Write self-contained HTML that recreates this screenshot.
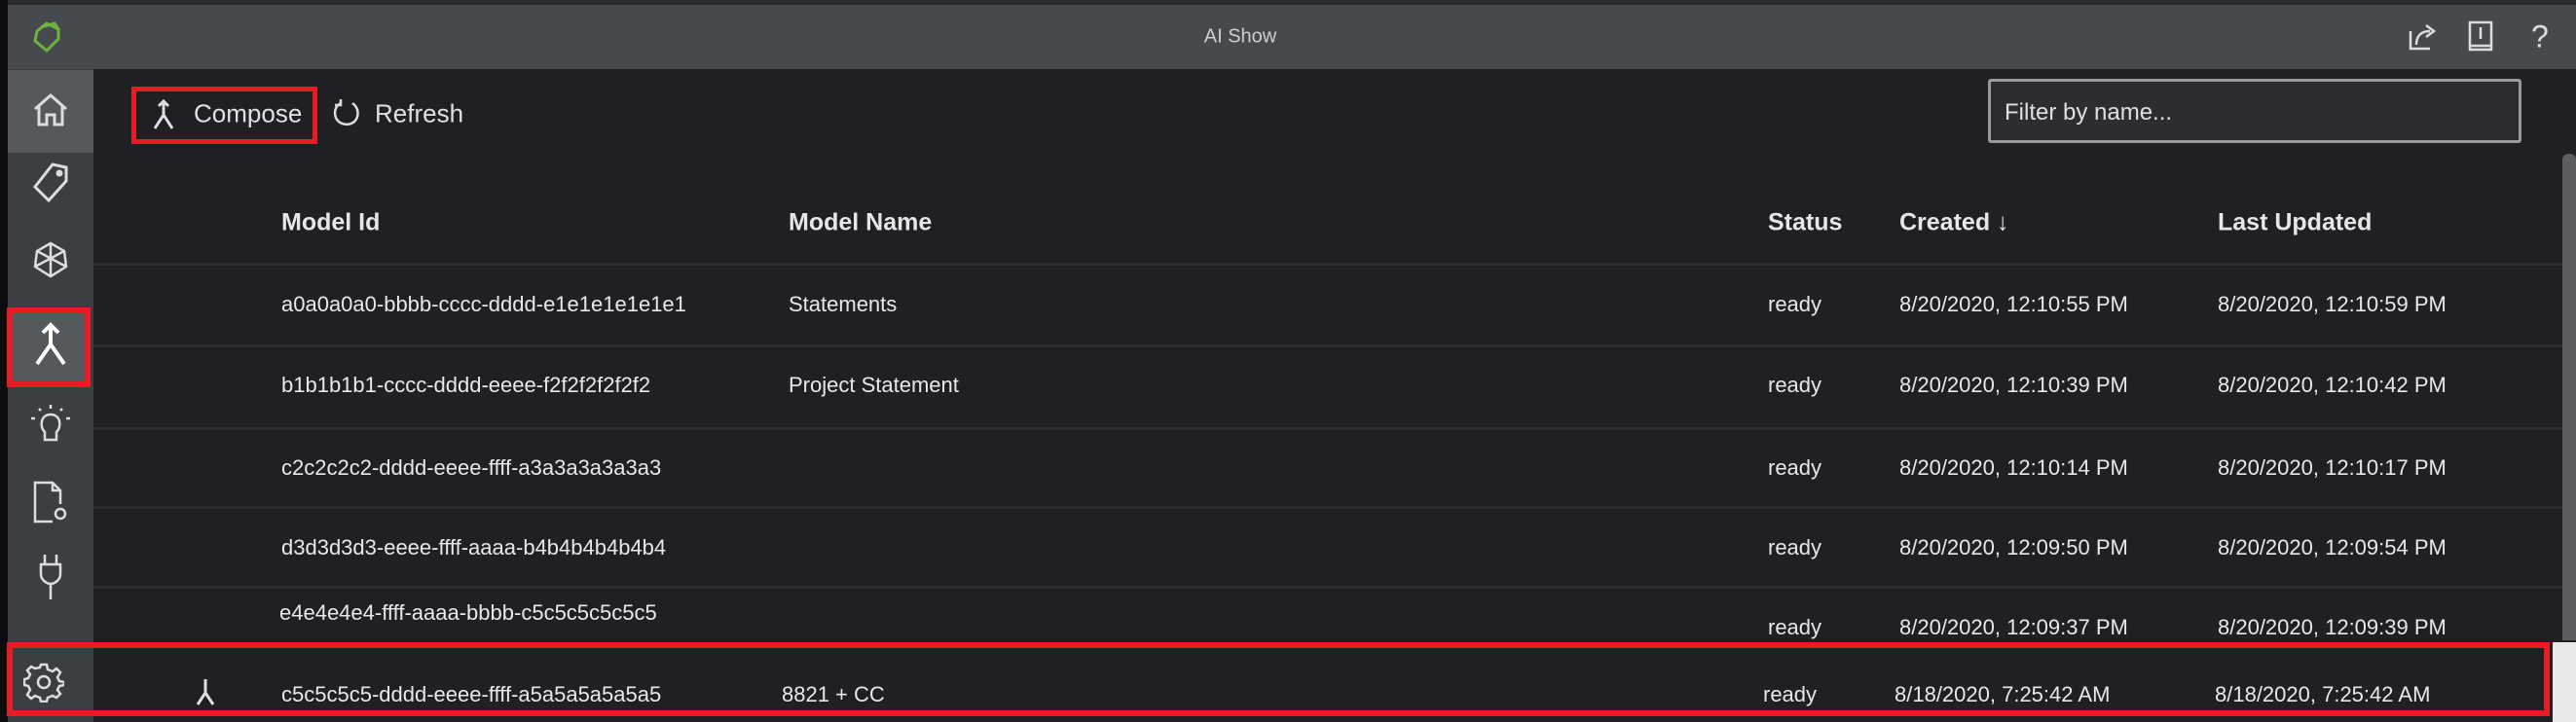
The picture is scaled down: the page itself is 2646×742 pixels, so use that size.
<!DOCTYPE html>
<html><head><meta charset="utf-8"><style>
*{margin:0;padding:0;box-sizing:border-box}
body{width:2646px;height:742px;background:#1f2024;position:relative;overflow:hidden;font-family:"Liberation Sans",sans-serif;color:#e8e8e8}
.a{position:absolute;white-space:nowrap}
.t{font-size:22px;line-height:22px;transform:translateY(-50%)}
.h{font-size:25px;font-weight:bold;transform:translateY(-50%);color:#e6e6e6}
.sep{position:absolute;left:96px;right:14px;height:3px;background:#2a2c30}
svg{position:absolute}
</style></head><body>
<div class="a" style="left:0;top:0;width:2646px;height:5px;background:#2a2b2e"></div>
<div class="a" style="left:0;top:5px;width:2646px;height:66px;background:#46494d"></div>
<div class="a" style="left:0;top:0;width:8px;height:742px;background:#0c0c0e"></div>
<div class="a" style="left:1274px;top:38px;font-size:20px;color:#cfcfcf;transform:translate(-50%,-50%)">AI Show</div>
<svg style="left:30px;top:20px" width="36" height="36" viewBox="0 0 36 36"><path d="M8 12 L18 4 L30 10 L30 20 L18 32 L6 22 Z M12 8 L26 4 L30 10" fill="none" stroke="#6cb33f" stroke-width="3"/></svg>
<svg style="left:2472px;top:22px" width="34" height="32" viewBox="0 0 34 32" fill="none" stroke="#ddd" stroke-width="2.5"><path d="M4 10 V28 H24 M10 24 C10 14 16 10 24 10 M20 4 L28 10 L20 16"/></svg>
<svg style="left:2534px;top:20px" width="28" height="36" viewBox="0 0 28 36" fill="none" stroke="#ddd" stroke-width="2.5"><rect x="3" y="3" width="22" height="28"/><path d="M3 27 H25 M14 8 V20"/></svg>
<div class="a" style="left:2600px;top:38px;font-size:32px;color:#ddd;transform:translateY(-50%)">?</div>
<!-- sidebar -->
<div class="a" style="left:8px;top:71px;width:88px;height:671px;background:#3b3e43"></div>
<div class="a" style="left:8px;top:72px;width:88px;height:85px;background:#55585c"></div>
<div class="a" style="left:12px;top:320px;width:80px;height:76px;background:#55585c"></div>
<div class="a" style="left:7px;top:316px;width:86px;height:82px;border:6px solid #e81c24"></div>
<svg style="left:32px;top:94px" width="40" height="38" viewBox="0 0 40 38" fill="none" stroke="#ddd" stroke-width="3"><path d="M4 18 L20 4 L36 18 M8 15 V34 H16 V24 H24 V34 H32 V15"/></svg>
<svg style="left:32px;top:166px" width="40" height="44" viewBox="0 0 40 44" fill="none" stroke="#ddd" stroke-width="3"><path d="M22 3 L36 6 L36 20 L18 40 L4 26 Z"/><circle cx="29" cy="12" r="2" fill="#ddd"/></svg>
<svg style="left:30px;top:246px" width="44" height="44" viewBox="0 0 44 44" fill="none" stroke="#ddd" stroke-width="2.5"><path d="M22 4 L36 12 L38 28 L22 38 L6 28 L8 12 Z M8 12 L38 28 M36 12 L6 28 M22 4 V38"/></svg>
<svg style="left:34px;top:330px" width="36" height="48" viewBox="0 0 36 48" fill="none" stroke="#fff" stroke-width="4"><path d="M18 4 V24 L4 44 M18 24 L32 44 M10 12 L18 4 L26 12"/></svg>
<svg style="left:32px;top:412px" width="40" height="46" viewBox="0 0 40 46" fill="none" stroke="#ddd" stroke-width="2.5"><path d="M14 32 C8 26 10 14 20 14 C30 14 32 26 26 32 V40 H14 Z M4 18 H0 M36 18 H40 M20 4 V8 M8 8 L10 10 M32 8 L30 10"/></svg>
<svg style="left:32px;top:492px" width="40" height="48" viewBox="0 0 40 48" fill="none" stroke="#ddd" stroke-width="2.5"><path d="M22 44 H4 V4 H22 L30 12 V26 M22 4 V12 H30"/><circle cx="30" cy="36" r="5"/></svg>
<svg style="left:36px;top:568px" width="32" height="50" viewBox="0 0 32 50" fill="none" stroke="#ddd" stroke-width="2.5"><path d="M10 2 V12 M22 2 V12 M6 12 H26 V22 C26 28 20 32 16 32 C12 32 6 28 6 22 Z M16 32 V48"/></svg>
<svg style="left:24px;top:680px" width="42" height="42" viewBox="0 0 42 42" fill="none" stroke="#ddd" stroke-width="2.5"><circle cx="21" cy="21" r="6"/><path d="M18 3 H24 L25 8 L30 10 L34 7 L38 11 L35 16 L37 20 L42 21 V24 L37 25 L35 29 L38 33 L34 37 L30 35 L25 37 L24 41 H18 L17 37 L12 35 L8 38 L4 34 L7 29 L5 25 L1 24 V18 L5 17 L7 13 L4 9 L8 5 L12 7 L17 6 Z"/></svg>
<!-- toolbar -->
<div class="a" style="left:135px;top:89px;width:191px;height:59px;border:5px solid #e81c24"></div>
<svg style="left:156px;top:102px" width="24" height="32" viewBox="0 0 24 32" fill="none" stroke="#ddd" stroke-width="3"><path d="M12 2 V16 L3 30 M12 16 L21 30 M7 7 L12 2 L17 7"/></svg>
<div class="a" style="left:199px;top:117px;font-size:26px;color:#e0e0e0;transform:translateY(-50%)">Compose</div>
<svg style="left:342px;top:100px" width="28" height="32" viewBox="0 0 28 32" fill="none" stroke="#ddd" stroke-width="2.5"><path d="M8 6 C2 9 1 16 3 21 C6 28 16 30 22 25 C27 20 27 11 20 6 M8 2 V8 H2"/></svg>
<div class="a" style="left:385px;top:117px;font-size:26px;color:#e0e0e0;transform:translateY(-50%)">Refresh</div>
<div class="a" style="left:2042px;top:81px;width:548px;height:66px;border:3px solid #9a9a9a;border-radius:3px;background:#2b2d31"></div>
<div class="a" style="left:2059px;top:116px;font-size:24px;color:#e0e0e0;transform:translateY(-50%)">Filter by name...</div>
<!-- scrollbar -->
<div class="a" style="left:2632px;top:158px;width:14px;height:500px;background:#5b5d61;border-radius:6px 6px 0 0"></div>
<div class="a" style="left:2622px;top:660px;width:24px;height:82px;background:#e8e8e8"></div>
<!-- header -->
<div class="a h" style="left:289px;top:229px">Model Id</div>
<div class="a h" style="left:810px;top:229px">Model Name</div>
<div class="a h" style="left:1816px;top:229px">Status</div>
<div class="a h" style="left:1951px;top:229px">Created ↓</div>
<div class="a h" style="left:2278px;top:229px">Last Updated</div>
<div class="sep" style="top:270px"></div>
<div class="sep" style="top:354px"></div>
<div class="sep" style="top:439px"></div>
<div class="sep" style="top:520px"></div>
<div class="sep" style="top:602px"></div>
<!-- rows -->
<div class="a t" style="left:289px;top:313px">a0a0a0a0-bbbb-cccc-dddd-e1e1e1e1e1e1</div>
<div class="a t" style="left:810px;top:313px">Statements</div>
<div class="a t" style="left:1816px;top:313px">ready</div>
<div class="a t" style="left:1951px;top:313px">8/20/2020, 12:10:55 PM</div>
<div class="a t" style="left:2278px;top:313px">8/20/2020, 12:10:59 PM</div>

<div class="a t" style="left:289px;top:396px">b1b1b1b1-cccc-dddd-eeee-f2f2f2f2f2f2</div>
<div class="a t" style="left:810px;top:396px">Project Statement</div>
<div class="a t" style="left:1816px;top:396px">ready</div>
<div class="a t" style="left:1951px;top:396px">8/20/2020, 12:10:39 PM</div>
<div class="a t" style="left:2278px;top:396px">8/20/2020, 12:10:42 PM</div>

<div class="a t" style="left:289px;top:481px">c2c2c2c2-dddd-eeee-ffff-a3a3a3a3a3a3</div>
<div class="a t" style="left:1816px;top:481px">ready</div>
<div class="a t" style="left:1951px;top:481px">8/20/2020, 12:10:14 PM</div>
<div class="a t" style="left:2278px;top:481px">8/20/2020, 12:10:17 PM</div>

<div class="a t" style="left:289px;top:563px">d3d3d3d3-eeee-ffff-aaaa-b4b4b4b4b4b4</div>
<div class="a t" style="left:1816px;top:563px">ready</div>
<div class="a t" style="left:1951px;top:563px">8/20/2020, 12:09:50 PM</div>
<div class="a t" style="left:2278px;top:563px">8/20/2020, 12:09:54 PM</div>

<div class="a t" style="left:287px;top:630px">e4e4e4e4-ffff-aaaa-bbbb-c5c5c5c5c5c5</div>
<div class="a t" style="left:1816px;top:645px">ready</div>
<div class="a t" style="left:1951px;top:645px">8/20/2020, 12:09:37 PM</div>
<div class="a t" style="left:2278px;top:645px">8/20/2020, 12:09:39 PM</div>

<div class="a" style="left:7px;top:660px;width:2612px;height:76px;border:6px solid #e81c24"></div>
<svg style="left:200px;top:696px" width="22" height="30" viewBox="0 0 22 30" fill="none" stroke="#ddd" stroke-width="3"><path d="M11 2 V16 L3 28 M11 16 L19 28"/></svg>
<div class="a t" style="left:289px;top:714px">c5c5c5c5-dddd-eeee-ffff-a5a5a5a5a5a5</div>
<div class="a t" style="left:803px;top:714px">8821 + CC</div>
<div class="a t" style="left:1811px;top:714px">ready</div>
<div class="a t" style="left:1946px;top:714px">8/18/2020, 7:25:42 AM</div>
<div class="a t" style="left:2275px;top:714px">8/18/2020, 7:25:42 AM</div>
</body></html>
